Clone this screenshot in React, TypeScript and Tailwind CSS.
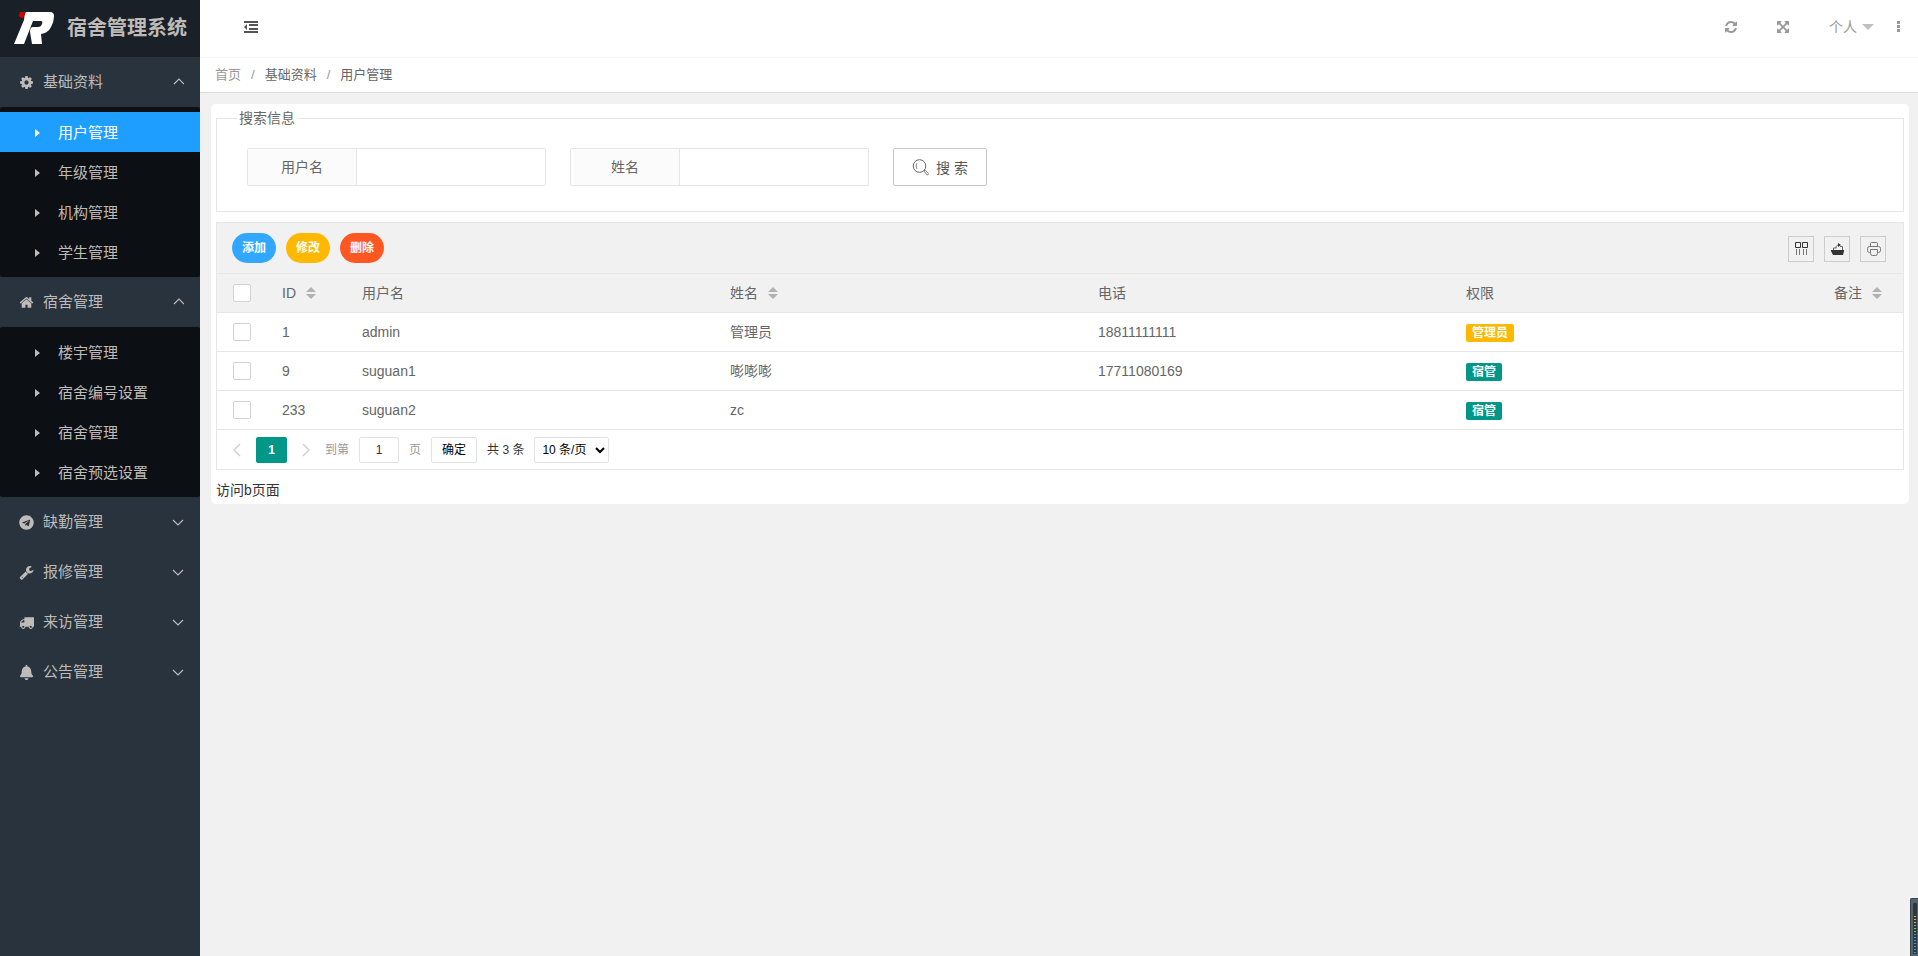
import { useState } from 'react';
import type { ReactNode } from 'react';
import { FaBell, FaTelegram } from 'react-icons/fa';

const GLYPHS = {
  cog: 'M1152 896q0-106-75-181t-181-75-181 75-75 181 75 181 181 75 181-75 75-181zm512-109v222q0 12-8 23t-20 13l-185 28q-19 54-39 91 35 50 107 138 10 12 10 25t-9 23q-27 37-99 108t-94 71q-12 0-26-9l-138-108q-44 23-91 38-16 136-29 186-7 28-36 28h-222q-14 0-24.5-8.5t-11.5-21.5l-28-184q-49-16-90-37l-141 107q-10 9-25 9-14 0-25-11-126-114-165-168-7-10-7-23 0-12 8-23 15-21 51-66.5t54-70.5q-27-50-41-99l-183-27q-13-2-21-12.5t-8-23.5v-222q0-12 8-23t19-13l186-28q14-46 39-92-40-57-107-138-10-12-10-24 0-10 9-23 26-36 98.5-107.5t94.5-71.5q13 0 26 10l138 107q44-23 91-38 16-136 29-186 7-28 36-28h222q14 0 24.5 8.5t11.5 21.5l28 184q49 16 90 37l142-107q9-9 24-9 13 0 25 10 129 119 165 170 7 8 7 22 0 12-8 23-15 21-51 66.5t-54 70.5q26 50 41 98l183 28q13 2 21 12.5t8 23.5z',
  home: 'M1472 992v480q0 26-19 45t-45 19h-384v-384h-256v384h-384q-26 0-45-19t-19-45v-480q0-1 .5-3t.5-3l575-474 575 474q1 2 1 6zm223-69l-62 74q-8 9-21 11h-3q-13 0-21-7l-692-577-692 577q-12 8-24 7-13-2-21-11l-62-74q-8-10-7-23.5t11-21.5l719-599q32-26 76-26t76 26l244 204v-195q0-14 9-23t23-9h192q14 0 23 9t9 23v408l219 182q10 8 11 21.5t-7 23.5z',
  wrench: 'M448 1472q0-26-19-45t-45-19-45 19-19 45 19 45 45 19 45-19 19-45zm644-420l-682 682q-37 37-90 37-52 0-91-37l-106-108q-38-36-38-90 0-53 38-91l681-681q39 98 114.5 173.5t173.5 114.5zm634-435q0 39-23 106-47 134-164.5 217.5t-258.5 83.5q-185 0-316.5-131.5t-131.5-316.5 131.5-316.5 316.5-131.5q58 0 121.5 16.5t107.5 46.5q16 11 16 28t-16 28l-293 169v224l193 107q5-3 79-48.5t135.5-81 70.5-35.5q15 0 23.5 10t8.5 25z',
  truck: 'M640 1408q0-52-38-90t-90-38-90 38-38 90 38 90 90 38 90-38 38-90zm-384-512h384v-256h-158q-13 0-22 9l-195 195q-9 9-9 22v30zm1280 512q0-52-38-90t-90-38-90 38-38 90 38 90 90 38 90-38 38-90zm256-1088v1024q0 15-4 26.5t-13.5 18.5-16.5 11.5-23.5 6-22.5 2-25.5 0-22.5-.5q0 106-75 181t-181 75-181-75-75-181h-384q0 106-75 181t-181 75-181-75-75-181h-64q-3 0-22.5.5t-25.5 0-22.5-2-23.5-6-16.5-11.5-13.5-18.5-4-26.5q0-26 19-45t45-19v-320q0-8-.5-35t0-38 2.5-34.5 6.5-37 14-30.5 22.5-30l198-198q19-19 50.5-32t58.5-13h160v-192q0-26 19-45t45-19h1024q26 0 45 19t19 45z',
  refresh: 'M1639 1056q0 5-1 7-64 268-268 434.5t-478 166.5q-146 0-282.5-55t-243.5-157l-129 129q-19 19-45 19t-45-19-19-45v-448q0-26 19-45t45-19h448q26 0 45 19t19 45-19 45l-137 137q71 66 161 102t187 36q134 0 250-65t186-179q11-17 53-117 8-23 30-23h192q13 0 22.5 9.5t9.5 22.5zm25-800v448q0 26-19 45t-45 19h-448q-26 0-45-19t-19-45 19-45l138-138q-148-137-349-137-134 0-250 65t-186 179q-11 17-53 117-8 23-30 23h-199q-13 0-22.5-9.5t-9.5-22.5v-7q65-268 270-434.5t480-166.5q146 0 284 55.5t245 156.5l130-129q19-19 45-19t45 19 19 45z',
  expand: 'M1411 541l-355 355 355 355 144-144q29-31 70-14 39 17 39 59v448q0 26-19 45t-45 19h-448q-42 0-59-40-17-39 14-69l144-144-355-355-355 355 144 144q31 30 14 69-17 40-59 40h-448q-26 0-45-19t-19-45v-448q0-42 40-59 39-17 69 14l144 144 355-355-355-355-144 144q-19 19-45 19-12 0-24-5-40-17-40-59v-448q0-26 19-45t45-19h448q42 0 59 40 17 39-14 69l-144 144 355 355 355-355-144-144q-31-30-14-69 17-40 59-40h448q26 0 45 19t19 45v448q0 42-39 59-13 5-25 5-26 0-45-19z',
};

function Glyph({ name, className }: { name: keyof typeof GLYPHS; className?: string }) {
  return (
    <svg viewBox="0 0 1792 1792" fill="currentColor" className={className} aria-hidden="true">
      <path d={GLYPHS[name]} />
    </svg>
  );
}

interface MenuGroup {
  title: string;
  icon: ReactNode;
  children: string[];
}

const MENU: MenuGroup[] = [
  { title: '基础资料', icon: <Glyph name="cog" className="size-[15px]" />, children: ['用户管理', '年级管理', '机构管理', '学生管理'] },
  { title: '宿舍管理', icon: <Glyph name="home" className="size-[15px]" />, children: ['楼宇管理', '宿舍编号设置', '宿舍管理', '宿舍预选设置'] },
  { title: '缺勤管理', icon: <FaTelegram className="size-[15px]" />, children: [] },
  { title: '报修管理', icon: <Glyph name="wrench" className="size-[15px]" />, children: [] },
  { title: '来访管理', icon: <Glyph name="truck" className="size-[15px]" />, children: [] },
  { title: '公告管理', icon: <FaBell className="size-[15px]" />, children: [] },
];

const USERS = [
  { id: 1, username: 'admin', name: '管理员', phone: '18811111111', role: '管理员' },
  { id: 9, username: 'suguan1', name: '嘭嘭嘭', phone: '17711080169', role: '宿管' },
  { id: 233, username: 'suguan2', name: 'zc', phone: '', role: '宿管' },
];

function Logo() {
  return (
    <svg viewBox="0 0 42 34" className="h-[34px] w-[42px]" aria-hidden="true">
      <path d="M12 1h25q4 0 4 4 0 6-3 11-3 6-10 7l1 10H19l-2-12q0-5 3-5h5q3 0 4-3 1-3-1-3h-8L11 33H1L11 9z" fill="#fff" />
      <path d="M7 1h6l-3 6q-4 0-4-3z" fill="#d40000" />
    </svg>
  );
}

function Sidebar() {
  const [active, setActive] = useState('0-0');
  return (
    <aside className="w-[200px] shrink-0 bg-[#28333e] text-[15px] text-[#bfbbb9]">
      <div className="flex h-[57px] items-center gap-3 bg-[#192027] pb-px pl-[13px]">
        <Logo />
        <h1 className="whitespace-nowrap text-xl font-bold">宿舍管理系统</h1>
      </div>
      <nav>
        {MENU.map((group, g) => (
          <div key={group.title}>
            <button type="button" className="flex h-[50px] w-full items-center pl-[19px] pr-4">
              <span className="flex w-6 items-center">{group.icon}</span>
              <span>{group.title}</span>
              <svg viewBox="0 0 12 8" className="ml-auto h-2 w-3" fill="none" stroke="currentColor" strokeWidth="1.2" aria-hidden="true">
                <path d={group.children.length ? 'M2 6l5-5 5 5' : 'M1 2l5 5 5-5'} />
              </svg>
            </button>
            {group.children.length > 0 && (
              <ul className="rounded-[2px] bg-[#0c0f13] py-[5px]">
                {group.children.map((item, i) => {
                  const key = `${g}-${i}`;
                  return (
                    <li key={item}>
                      <a
                        href="#"
                        onClick={() => setActive(key)}
                        className={`flex h-10 items-center pl-[35px] pt-px ${active === key ? 'bg-[#1e9fff] text-white' : ''}`}
                      >
                        <svg viewBox="0 0 5 8" className="h-2 w-[5px]" fill="currentColor" aria-hidden="true">
                          <path d="M0 0l5 4-5 4z" />
                        </svg>
                        <span className="ml-[18px]">{item}</span>
                      </a>
                    </li>
                  );
                })}
              </ul>
            )}
          </div>
        ))}
      </nav>
    </aside>
  );
}

function TopBar() {
  return (
    <header className="flex h-[58px] items-center border-b border-[#f4f4f4] bg-white pb-[3px] pl-11 pr-[18px] text-[#999]">
      <button type="button" aria-label="收起菜单" className="text-[#555]">
        <svg viewBox="0 0 14 12" className="h-3 w-[14px]" fill="currentColor" aria-hidden="true">
          <path d="M0 0h14v2H0zM5 3h9v2H5zM5 7h9v2H5zM0 10h14v2H0zM3 3v6L0 6z" />
        </svg>
      </button>
      <div className="ml-auto flex items-center">
        <button type="button" aria-label="刷新"><Glyph name="refresh" className="size-[14px]" /></button>
        <button type="button" aria-label="全屏" className="ml-[38px]"><Glyph name="expand" className="size-[14px]" /></button>
        <button type="button" className="ml-[39px] flex items-center gap-[5px] text-sm">
          个人
          <svg viewBox="0 0 12 6" className="h-[6px] w-3" fill="#c0c0c0" aria-hidden="true"><path d="M0 0h12L6 6z" /></svg>
        </button>
        <button type="button" aria-label="更多" className="ml-[23px]">
          <svg viewBox="0 0 3 12" className="h-3 w-[3px]" fill="currentColor" aria-hidden="true"><path d="M0 0h3v3H0zM0 4h3v3H0zM0 8h3v3H0z" /></svg>
        </button>
      </div>
    </header>
  );
}

function SearchField({ id, label }: { id: string; label: string }) {
  return (
    <div className="flex h-[38px] w-[299px] rounded-[2px] border border-[#e6e6e6]">
      <label htmlFor={id} className="flex w-[109px] items-center justify-center border-r border-[#e6e6e6] bg-[#fbfbfb]">{label}</label>
      <input id={id} type="text" className="min-w-0 flex-1 px-[10px] outline-none" />
    </div>
  );
}

function SortArrows() {
  return (
    <svg viewBox="0 0 10 12" className="h-3 w-[10px]" fill="#b2b2b2" aria-hidden="true">
      <path d="M5 0l5 5H0zM0 7h10l-5 5z" />
    </svg>
  );
}

function Heading({ children, sortable }: { children: ReactNode; sortable?: boolean }) {
  return (
    <th scope="col" className="px-[15px] text-left font-normal">
      <span className="flex items-center gap-[10px] whitespace-nowrap">
        {children}
        {sortable && <SortArrows />}
      </span>
    </th>
  );
}

function Check({ label }: { label: string }) {
  return <input type="checkbox" aria-label={label} className="block size-[18px] appearance-none rounded-[2px] border border-[#d2d2d2] bg-white checked:bg-[#5fb878]" />;
}

function Toolbar() {
  const pill = 'h-[30px] rounded-full px-[10px] text-xs font-bold text-white';
  const tool = 'flex size-[26px] items-center justify-center border border-[#ccc]';
  return (
    <div className="flex h-[51px] items-center gap-[10px] border-b border-[#e6e6e6] bg-[#f1f1f1] pl-[15px] pr-[17px]">
      <button type="button" className={`${pill} bg-[#32a7ff]`}>添加</button>
      <button type="button" className={`${pill} bg-[#ffb800]`}>修改</button>
      <button type="button" className={`${pill} bg-[#ff5722]`}>删除</button>
      <div className="ml-auto flex gap-[10px] pt-[2px]">
        <button type="button" aria-label="筛选列" className={tool}>
          <svg viewBox="0 0 14 14" className="ml-[2px] size-[14px]" fill="none" stroke="#333" aria-hidden="true">
            <path d="M.5 .5h5v5h-5zM7.500 .5h5v5h-5z" />
            <path d="M1.500 7v6M4.500 7v6M8.500 7v6M11.500 7v6" stroke="#777" />
          </svg>
        </button>
        <button type="button" aria-label="导出" className={tool}>
          <svg viewBox="0 0 14 14" className="ml-[2px] size-[14px]" fill="none" aria-hidden="true">
            <path d="M0 8h13v1l-1 4H2L0 9z" fill="#333" />
            <path d="M2.500 8V6h3M11.500 8V4.500H9M5 6c0-2 1-3 3-3" stroke="#666" />
            <path d="M7 1l3 2-3 2z" fill="#333" />
          </svg>
        </button>
        <button type="button" aria-label="打印" className={tool}>
          <svg viewBox="0 0 14 14" className="ml-[2px] size-[14px]" fill="none" stroke="#777" aria-hidden="true">
            <path d="M3.500 4V1.500q0-1 1-1h5q1 0 1 1V4M3.500 10.500h-1q-2 0-2-2v-2q0-2 2-2h9q2 0 2 2v2q0 2-2 2h-1M3.500 7.500h7v4q0 2-2 2h-3q-2 0-2-2z" />
          </svg>
        </button>
      </div>
    </div>
  );
}

function UserTable() {
  return (
    <table className="w-full table-fixed border-separate border-spacing-0 [&_td]:border-b [&_td]:border-[#e6e6e6] [&_th]:border-b [&_th]:border-[#e6e6e6]">
      <colgroup>
        <col className="w-[50px]" />
        <col className="w-20" />
        <col />
        <col />
        <col />
        <col />
        <col className="w-[84px]" />
      </colgroup>
      <thead>
        <tr className="h-[39px] bg-[#f1f1f1]">
          <th scope="col" className="pl-4"><Check label="全选" /></th>
          <Heading sortable>ID</Heading>
          <Heading>用户名</Heading>
          <Heading sortable>姓名</Heading>
          <Heading>电话</Heading>
          <Heading>权限</Heading>
          <Heading sortable>备注</Heading>
        </tr>
      </thead>
      <tbody>
        {USERS.map((u) => (
          <tr key={u.id} className="h-[39px]">
            <td className="pl-4"><Check label={u.username} /></td>
            <td className="px-[15px]">{u.id}</td>
            <td className="px-[15px]">{u.username}</td>
            <td className="px-[15px]">{u.name}</td>
            <td className="px-[15px]">{u.phone}</td>
            <td className="px-[15px] pt-[2px]">
              <span className={`flex h-[18px] w-fit items-center rounded-[2px] px-[6px] text-xs font-bold text-white ${u.role === '管理员' ? 'bg-[#ffb800]' : 'bg-[#009688]'}`}>{u.role}</span>
            </td>
            <td />
          </tr>
        ))}
      </tbody>
    </table>
  );
}

function Pager() {
  return (
    <div className="flex items-center pb-[6px] pl-4 pt-[7px] text-xs text-[#333]">
      <button type="button" aria-label="上一页" className="text-[#d2d2d2]">
        <svg viewBox="0 0 8 14" className="h-[14px] w-2" fill="none" stroke="currentColor" strokeWidth="1.500" aria-hidden="true"><path d="M7 1L1 7l6 6" /></svg>
      </button>
      <button type="button" className="ml-[15px] h-[26px] w-[31px] rounded-[2px] bg-[#009688] font-bold text-white">1</button>
      <button type="button" aria-label="下一页" className="ml-[15px] text-[#d2d2d2]">
        <svg viewBox="0 0 8 14" className="h-[14px] w-2" fill="none" stroke="currentColor" strokeWidth="1.500" aria-hidden="true"><path d="M1 1l6 6-6 6" /></svg>
      </button>
      <label className="ml-[15px] flex items-center gap-[10px] text-[#999]">
        到第
        <input type="text" defaultValue="1" className="h-[26px] w-10 rounded-[2px] border border-[#e2e2e2] text-center text-[#333] outline-none" />
        页
      </label>
      <button type="button" className="ml-[10px] h-[26px] rounded-[2px] border border-[#e2e2e2] px-[10px] text-black">确定</button>
      <span className="ml-[10px]">共 3 条</span>
      <select aria-label="每页条数" className="ml-[10px] h-[26px] w-[75px] rounded-[2px] border border-[#e2e2e2] bg-white pl-[3px] text-black">
        <option>10 条/页</option>
        <option>20 条/页</option>
        <option>50 条/页</option>
      </select>
    </div>
  );
}

// Level meter docked to the corner of the window
function LevelMeter() {
  return (
    <div className="fixed bottom-0 right-0 h-[58px] w-2 rounded-tl-[2px] border-l border-t border-[#3c444b] bg-[#56626c] p-[2px] pt-1">
      <svg viewBox="0 0 4 51" className="h-[51px] w-1" aria-hidden="true">
        <rect width="4" height="51" fill="#30373e" />
        {Array.from({ length: 13 }, (_, i) => (
          <rect key={i} x="1" y={13 + i * 3} width="2" height="1" fill={i < 3 ? '#e0c21c' : i < 6 ? '#8fc850' : '#2ba8e8'} />
        ))}
      </svg>
    </div>
  );
}

export default function App() {
  return (
    <div className="flex min-h-screen bg-[#f1f1f1] font-['Liberation_Sans','Noto_Sans_CJK_SC',sans-serif] text-sm text-[#666]">
      <Sidebar />
      <div className="min-w-0 flex-1">
        <TopBar />
        <nav aria-label="面包屑" className="flex h-[35px] items-center gap-[10px] border-b border-[#dcdcdc] bg-white pl-[15px] text-[13px]">
          <a href="#" className="text-[#999]">首页</a>
          <span className="text-[#999]">/</span>
          <a href="#">基础资料</a>
          <span className="text-[#999]">/</span>
          <span>用户管理</span>
        </nav>
        <main className="ml-[11px] mr-[9px] mt-[11px] rounded-[5px] bg-white px-[5px] pt-1">
          <fieldset className="border border-[#e6e6e6] px-[30px] pb-[25px] pt-[19px]">
            <legend className="-ml-[10px] px-[2px] leading-[21px]">搜索信息</legend>
            <form className="flex flex-wrap gap-6" onSubmit={(e) => e.preventDefault()}>
              <SearchField id="username" label="用户名" />
              <SearchField id="realname" label="姓名" />
              <button type="submit" className="flex h-[38px] items-center gap-[7px] rounded-[2px] border border-[#c9c9c9] px-[18px] pt-px text-[#555]">
                <svg viewBox="0 0 17 17" className="size-[17px]" fill="none" stroke="currentColor" strokeWidth="0.9" aria-hidden="true">
                  <circle cx="7.500" cy="7" r="6.300" />
                  <path d="M5 4q-2 3 0 6M12 12l1-1 3.500 3.500q0 1.500-1.500 1.500z" strokeWidth="0.7" />
                </svg>
                搜 索
              </button>
            </form>
          </fieldset>
          <section className="mt-[10px] border border-[#e6e6e6]">
            <Toolbar />
            <UserTable />
            <Pager />
          </section>
          <p className="pb-1 pt-[10px] leading-5 text-[#333]">访问b页面</p>
        </main>
      </div>
      <LevelMeter />
    </div>
  );
}
